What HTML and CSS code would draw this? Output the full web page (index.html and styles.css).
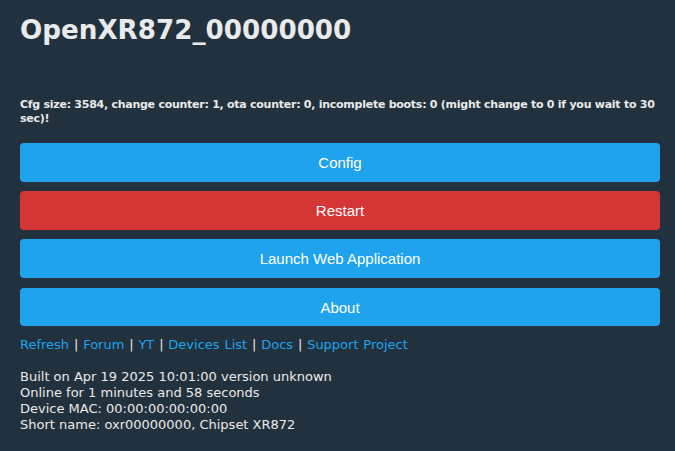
FILE: index.html
```html
<!DOCTYPE html>
<html>
<head>
<meta charset="utf-8">
<link rel="stylesheet" href="styles.css">
</head>
<body>
<div class="page">
  <h1 class="title">OpenXR872_00000000</h1>
  <p class="cfg">Cfg size: 3584, change counter: 1, ota counter: 0, incomplete boots: 0 (might change to 0 if you wait to 30 sec)!</p>
  <div class="buttons">
    <div class="btn">Config</div>
    <div class="btn btn-red">Restart</div>
    <div class="btn">Launch Web Application</div>
    <div class="btn btn-last">About</div>
  </div>
  <div class="links">
    <a href="#">Refresh</a> | <a href="#">Forum</a> | <a href="#">YT</a> | <a href="#">Devices List</a> | <a href="#">Docs</a> | <a href="#">Support Project</a>
  </div>
  <div class="info">
    <div>Built on Apr 19 2025 10:01:00 version unknown</div>
    <div>Online for 1 minutes and 58 seconds</div>
    <div>Device MAC: 00:00:00:00:00:00</div>
    <div>Short name: oxr00000000, Chipset XR872</div>
  </div>
</div>
</body>
</html>
```

FILE: styles.css
```css
html, body {
  margin: 0;
  padding: 0;
  background: #22313e;
  color: #eaeaea;
  font-family: "DejaVu Sans", Verdana, sans-serif;
}
.page {
  width: 640px;
  margin-left: 20px;
  padding-top: 13px;
}
.title {
  margin: 0;
  font-size: 26.2px;
  line-height: 34px;
  font-weight: bold;
}
.cfg {
  margin: 51px 0 0 0;
  font-size: 11px;
  line-height: 14px;
  font-weight: bold;
  letter-spacing: -0.26px;
}
.buttons {
  margin-top: 17px;
  display: flex;
  flex-direction: column;
  gap: 9px;
}
.btn {
  height: 39px;
  border-radius: 4px;
  background: #1fa3ec;
  color: #ffffff;
  font-family: "Liberation Sans", Arial, sans-serif;
  font-size: 15px;
  display: flex;
  align-items: center;
  justify-content: center;
}
.btn-red {
  background: #d43535;
}
.btn-last {
  margin-top: 1px;
  height: 38px;
}
.links {
  margin-top: 11px;
  font-size: 13px;
  line-height: 16px;
  word-spacing: 0.7px;
  color: #eaeaea;
}
.links a {
  color: #1fa3ec;
  text-decoration: none;
}
.info {
  margin-top: 16px;
  font-size: 13px;
  line-height: 16px;
}
```
